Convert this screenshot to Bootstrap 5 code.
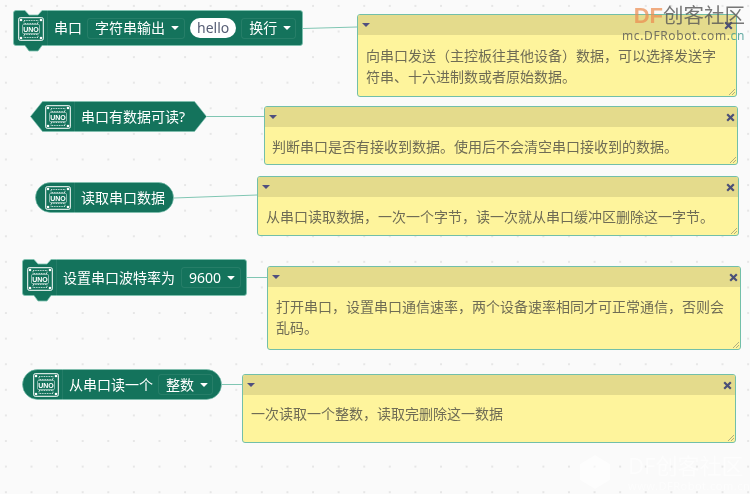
<!DOCTYPE html>
<html lang="zh-CN">
<head>
    <meta charset="UTF-8">
    <title>串口积木</title>
    <link href="https://cdn.jsdelivr.net/npm/bootstrap@5.3.0/dist/css/bootstrap.min.css" rel="stylesheet">
    <style>
        body {
            font-family: "Noto Sans", "Noto Sans CJK SC", sans-serif;
            background-color: #fafafa;
            overflow: hidden;
        }

        .canvas {
            position: relative;
            width: 750px;
            height: 494px;
            overflow: hidden;
            background-image: radial-gradient(circle at 6px 6px, #e6e6e6 0.8px, transparent 1.2px);
            background-size: 25.6px 25.6px;
            filter: blur(.35px);
        }

        .links { position: absolute; inset: 0; }

        /* blocks */
        .blk {
            position: absolute;
            display: flex;
            align-items: center;
            color: #fff;
            font-size: 14px;
            line-height: 20px;
            white-space: nowrap;
        }
        .blk-shape { position: absolute; left: 0; top: 0; }
        .blk > *:not(.blk-shape) { position: relative; }
        .blk-icon { width: 26px; height: 24px; flex: none; }
        .blk-sep { width: 1px; align-self: stretch; background: rgba(255,255,255,.07); margin: 0 6px 0 3px; flex: none; }
        .blk-field {
            display: flex;
            align-items: center;
            height: 21px;
            padding: 0 7px;
            gap: 6px;
            border: 1px solid rgba(255,255,255,.08);
            border-radius: 3px;
        }
        .caret-w {
            width: 0;
            height: 0;
            border-left: 4px solid transparent;
            border-right: 4px solid transparent;
            border-top: 4px solid #fff;
            border-radius: 1px;
        }
        .blk-str {
            height: 20px;
            padding: 0 7px;
            border-radius: 10px;
            background: #fff;
            color: #575e75;
            font-size: 14px;
        }

        #b1 { left: 13px; top: 10px; width: 290px; height: 36px; padding-left: 5px; }
        #b1 .blk-icon { margin-top: 1px; }
        #b1 .txt { margin-right: 5px; }
        #b1 .f1 { width: 98px; }
        #b1 .blk-str { margin: 0 5px; }
        #b1 .f2 { width: 55px; }
        #b2 { left: 30px; top: 101px; width: 177px; height: 31px; padding-left: 15px; }
        #b3 { left: 35px; top: 182px; width: 139px; height: 31px; padding-left: 10px; }
        #b4 { left: 22px; top: 259px; width: 225px; height: 37px; padding-left: 5px; }
        #b4 .blk-icon { margin-top: 2px; }
        #b4 .txt { margin-right: 6px; }
        #b4 .blk-field { width: 60px; }
        #b5 { left: 22px; top: 369px; width: 200px; height: 31px; padding-left: 11px; }
        #b5 .txt { margin-right: 5px; }
        #b5 .blk-field { width: 55px; }

        /* comments */
        .cmt {
            position: absolute;
            display: flex;
            flex-direction: column;
            background: #fef49c;
            border: 1px solid #72bfa9;
            border-radius: 3px;
            overflow: hidden;
            color: #6f6c55;
            font-size: 14px;
            line-height: 21px;
        }
        .cmt-head {
            height: 20px;
            flex: none;
            background: #e4db8c;
            padding: 0 3px 0 4px;
        }
        .caret-d {
            width: 0;
            height: 0;
            border-left: 4px solid transparent;
            border-right: 4px solid transparent;
            border-top: 4px solid #4f4f7f;
        }
        .cmt-x { width: 9px; height: 9px; }
        .cmt-body { padding: 9px 8px 0 8px; }
        .cmt-grip { position: absolute; right: 1px; bottom: 1px; width: 7px; height: 7px; }

        #n1 { left: 357px; top: 14px; width: 380px; height: 83px; }
        #n1 .cmt-body { padding-top: 10px; }
        #n2 { left: 264px; top: 106px; width: 474px; height: 59px; }
        #n2 .cmt-body { padding-left: 7px; }
        #n2 .cmt-head { padding-right: 2px; }
        #n3 { left: 257px; top: 176px; width: 482px; height: 60px; }
        #n4 { left: 267px; top: 266px; width: 474px; height: 84px; }
        #n4 .cmt-head { padding-right: 2px; }
        #n5 { left: 242px; top: 374px; width: 494px; height: 69px; }
        #n5 .cmt-body { padding-top: 8px; }

        /* site watermarks */
        .wm { position: absolute; white-space: nowrap; }
        .wm-top { right: 5px; top: 2px; text-align: right; }
        .wm-logo {
            font-size: 20.5px;
            line-height: 27px;
            color: rgba(85,85,85,.8);
        }
        .wm-logo b { color: rgba(236,140,80,.72); font-weight: 700; font-family: "Liberation Sans", sans-serif; font-size: 22px; }
        .wm-url {
            font-size: 12px;
            line-height: 14px;
            letter-spacing: .6px;
            color: rgba(85,85,85,.8);
        }
        .wm-url i { font-style: normal; color: rgba(60,150,140,.8); }
        .wm-bot { left: 578px; top: 451px; color: #fff; opacity: .55; }
        .wm-bot .big { font-size: 22px; line-height: 28px; }
        .wm-bot .sm { font-size: 11px; line-height: 13px; letter-spacing: .5px; }
        .wm-gap { gap: 16px; }
    </style>
</head>
<body>

<svg width="0" height="0" class="position-absolute">
    <symbol id="uno" viewBox="0 0 26 24">
        <rect x=".7" y=".7" width="24.6" height="22.6" rx="1.5" fill="#14735c" stroke="#fff" stroke-width="1"/>
        <rect x="6" y="3.500" width="14" height="3" fill="none" stroke="#fff" stroke-width=".8" stroke-dasharray="1 .7"/>
        <rect x="6" y="17.500" width="14" height="3" fill="none" stroke="#fff" stroke-width=".8" stroke-dasharray="1 .7"/>
        <rect x="4.500" y="7.500" width="17" height="9" rx="1" fill="none" stroke="#fff" stroke-width=".5"/>
        <circle cx="3" cy="3" r="1.300" fill="#fff"/><circle cx="23" cy="3" r="1.300" fill="#fff"/>
        <circle cx="3" cy="21" r="1.300" fill="#fff"/><circle cx="23" cy="21" r="1.300" fill="#fff"/>
        <text x="13" y="14.800" text-anchor="middle" fill="#fff" font-size="7" font-weight="700" font-family="Liberation Sans, sans-serif">UNO</text>
    </symbol>
    <symbol id="cross" viewBox="0 0 9 9">
        <path d="M1.200 1.200 7.800 7.800M7.800 1.200 1.200 7.800" stroke="#4a4f78" stroke-width="2.200" fill="none"/>
    </symbol>
    <symbol id="grip" viewBox="0 0 7 7">
        <path d="M1 7 7 1M4 7 7 4" stroke="#9a9a7a" stroke-width=".8" fill="none"/>
    </symbol>
</svg>

<div class="canvas">
    <svg class="links" width="750" height="494">
        <g stroke="#80c6b3" stroke-width="1" fill="none">
            <path d="M303 28.500 357 27"/>
            <path d="M207 116.500H264"/>
            <path d="M174 198 257 195"/>
            <path d="M247 277.500H267"/>
            <path d="M222 384.500H242"/>
        </g>
    </svg>

    <!-- 串口输出 -->
    <div class="blk" id="b1">
        <svg class="blk-shape" width="290" height="42" viewBox="0 0 290 42">
            <path d="M3 .5H12L16 5H25L29 .5H287a2.500 2.500 0 0 1 2.500 2.500V33a2.500 2.500 0 0 1-2.500 2.500H29L25 41H16L12 35.500H3A2.500 2.500 0 0 1 .5 33V3A2.500 2.500 0 0 1 3 .5Z" fill="#14735c" stroke="#7cc3b0" stroke-width=".8"/>
        </svg>
        <svg class="blk-icon"><use href="#uno"/></svg>
        <span class="blk-sep"></span>
        <span class="txt">串口</span>
        <span class="blk-field f1 justify-content-between"><span>字符串输出</span><span class="caret-w"></span></span>
        <span class="blk-str">hello</span>
        <span class="blk-field f2 justify-content-between"><span>换行</span><span class="caret-w"></span></span>
    </div>

    <!-- 串口有数据可读? -->
    <div class="blk" id="b2">
        <svg class="blk-shape" width="177" height="31" viewBox="0 0 177 31">
            <path d="M.5 15.500 12.500.5H164.500L176.500 15.500 164.500 30.500H12.500Z" fill="#14735c" stroke="#7cc3b0" stroke-width=".6"/>
        </svg>
        <svg class="blk-icon"><use href="#uno"/></svg>
        <span class="blk-sep"></span>
        <span class="txt">串口有数据可读?</span>
    </div>

    <!-- 读取串口数据 -->
    <div class="blk" id="b3">
        <svg class="blk-shape" width="139" height="31" viewBox="0 0 139 31">
            <rect x=".5" y=".5" width="138" height="30" rx="15" fill="#14735c" stroke="#7cc3b0" stroke-width=".6"/>
        </svg>
        <svg class="blk-icon"><use href="#uno"/></svg>
        <span class="blk-sep"></span>
        <span class="txt">读取串口数据</span>
    </div>

    <!-- 设置串口波特率 -->
    <div class="blk" id="b4">
        <svg class="blk-shape" width="225" height="43" viewBox="0 0 225 43">
            <path d="M3 .5H12L16 5H25L29 .5H222a2.500 2.500 0 0 1 2.500 2.500V34a2.500 2.500 0 0 1-2.500 2.500H29L25 42H16L12 36.500H3A2.500 2.500 0 0 1 .5 34V3A2.500 2.500 0 0 1 3 .5Z" fill="#14735c" stroke="#7cc3b0" stroke-width=".8"/>
        </svg>
        <svg class="blk-icon"><use href="#uno"/></svg>
        <span class="blk-sep"></span>
        <span class="txt">设置串口波特率为</span>
        <span class="blk-field justify-content-between"><span>9600</span><span class="caret-w"></span></span>
    </div>

    <!-- 从串口读一个 -->
    <div class="blk" id="b5">
        <svg class="blk-shape" width="200" height="31" viewBox="0 0 200 31">
            <rect x=".5" y=".5" width="199" height="30" rx="15" fill="#14735c" stroke="#7cc3b0" stroke-width=".6"/>
        </svg>
        <svg class="blk-icon"><use href="#uno"/></svg>
        <span class="blk-sep"></span>
        <span class="txt">从串口读一个</span>
        <span class="blk-field justify-content-between"><span>整数</span><span class="caret-w"></span></span>
    </div>

    <!-- comments -->
    <div class="cmt" id="n1">
        <div class="cmt-head d-flex align-items-center justify-content-between"><span class="caret-d"></span><svg class="cmt-x"><use href="#cross"/></svg></div>
        <div class="cmt-body">向串口发送（主控板往其他设备）数据，可以选择发送字符串、十六进制数或者原始数据。</div>
        <svg class="cmt-grip"><use href="#grip"/></svg>
    </div>
    <div class="cmt" id="n2">
        <div class="cmt-head d-flex align-items-center justify-content-between"><span class="caret-d"></span><svg class="cmt-x"><use href="#cross"/></svg></div>
        <div class="cmt-body">判断串口是否有接收到数据。使用后不会清空串口接收到的数据。</div>
        <svg class="cmt-grip"><use href="#grip"/></svg>
    </div>
    <div class="cmt" id="n3">
        <div class="cmt-head d-flex align-items-center justify-content-between"><span class="caret-d"></span><svg class="cmt-x"><use href="#cross"/></svg></div>
        <div class="cmt-body">从串口读取数据，一次一个字节，读一次就从串口缓冲区删除这一字节。</div>
        <svg class="cmt-grip"><use href="#grip"/></svg>
    </div>
    <div class="cmt" id="n4">
        <div class="cmt-head d-flex align-items-center justify-content-between"><span class="caret-d"></span><svg class="cmt-x"><use href="#cross"/></svg></div>
        <div class="cmt-body">打开串口，设置串口通信速率，两个设备速率相同才可正常通信，否则会乱码。</div>
        <svg class="cmt-grip"><use href="#grip"/></svg>
    </div>
    <div class="cmt" id="n5">
        <div class="cmt-head d-flex align-items-center justify-content-between"><span class="caret-d"></span><svg class="cmt-x"><use href="#cross"/></svg></div>
        <div class="cmt-body">一次读取一个整数，读取完删除这一数据</div>
        <svg class="cmt-grip"><use href="#grip"/></svg>
    </div>

    <!-- watermarks -->
    <div class="wm wm-top">
        <div class="wm-logo"><b>DF</b>创客社区</div>
        <div class="wm-url">mc.DFRobot.com.<i>cn</i></div>
    </div>
    <div class="wm wm-bot">
        <div class="d-flex align-items-center wm-gap">
            <svg width="34" height="38" viewBox="0 0 34 38"><path d="M17 2 32 11V27L17 36 2 27V11Z" fill="#fff"/></svg>
            <div>
                <div class="big">DF创客社区</div>
                <div class="sm">www.DFRobot.com.cn</div>
            </div>
        </div>
    </div>
</div>

<script src="https://cdn.jsdelivr.net/npm/bootstrap@5.3.0/dist/js/bootstrap.bundle.min.js"></script>
</body>
</html>
